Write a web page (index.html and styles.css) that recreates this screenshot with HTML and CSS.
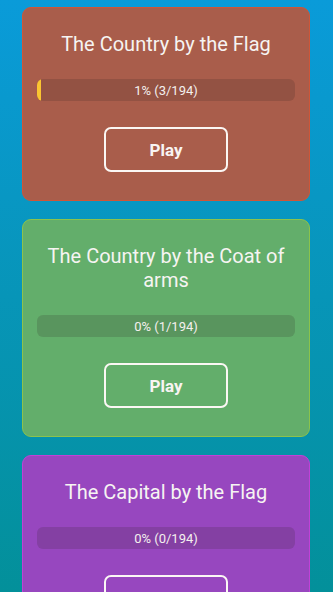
FILE: index.html
```html
<!DOCTYPE html>
<html>
<head>
<meta charset="utf-8">
<link rel="stylesheet" href="styles.css">
</head>
<body>
<div class="list">
  <div class="card card-orange">
    <div class="title">The Country by the Flag</div>
    <div class="track"><div class="fill" style="width:1.5%"></div><span class="label">1% (3/194)</span></div>
    <div class="btn">Play</div>
  </div>
  <div class="card card-green">
    <div class="title">The Country by the Coat of arms</div>
    <div class="track"><div class="fill" style="width:0%"></div><span class="label">0% (1/194)</span></div>
    <div class="btn">Play</div>
  </div>
  <div class="card card-purple">
    <div class="title">The Capital by the Flag</div>
    <div class="track"><div class="fill" style="width:0%"></div><span class="label">0% (0/194)</span></div>
    <div class="btn">Play</div>
  </div>
</div>
</body>
</html>
```
FILE: styles.css
```css
html, body {
  margin: 0;
  padding: 0;
  height: 100%;
}
body {
  background: linear-gradient(to bottom, #0a9bd9 0%, #0795b8 50%, #03909a 100%);
  font-family: Roboto, "Noto Sans", sans-serif;
  overflow: hidden;
}
.list {
  display: flex;
  flex-direction: column;
  gap: 18px;
  padding: 7px 23px 0 22px;
}
.card {
  border: 1px solid;
  border-radius: 9px;
  padding: 24px 14px 28px;
  display: flex;
  flex-direction: column;
  align-items: center;
}
.card-orange { background: #a95d4b; border-color: #cf5638; }
.card-green { background: #63ae6b; border-color: #8cc34c; }
.card-purple { background: #9747bf; border-color: #c141d6; }
.title {
  color: #f6f4f2;
  font-size: 20px;
  line-height: 24px;
  text-align: center;
  padding: 0 8px;
}
.track {
  margin-top: 23px;
  align-self: stretch;
  height: 22px;
  border-radius: 6px;
  background: rgba(40, 30, 30, 0.17);
  position: relative;
  overflow: hidden;
  display: flex;
  align-items: center;
  justify-content: center;
}
.fill {
  position: absolute;
  left: 0;
  top: 0;
  bottom: 0;
  background: #fbc531;
}
.label {
  position: relative;
  color: #f4f0ee;
  font-size: 13px;
}
.btn {
  margin-top: 26px;
  width: 124px;
  height: 45px;
  box-sizing: border-box;
  border: 2px solid #fbf7f4;
  border-radius: 7px;
  display: flex;
  align-items: center;
  justify-content: center;
  color: #f8f4f2;
  font-weight: 700;
  font-size: 17px;
}
```
